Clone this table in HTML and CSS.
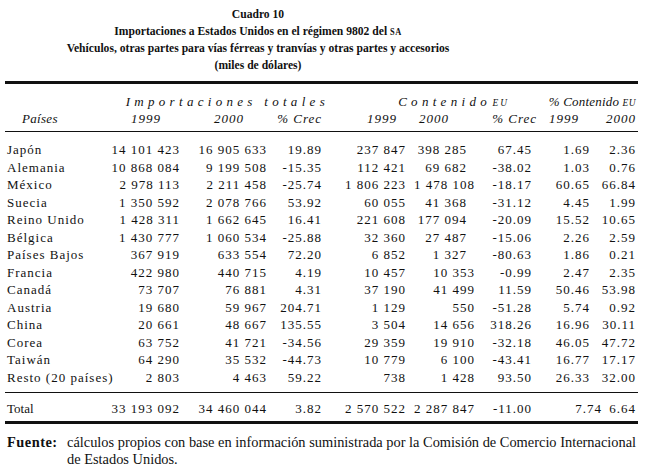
FILE: index.html
```html
<!DOCTYPE html>
<html lang="es">
<head>
<meta charset="utf-8">
<title>Cuadro 10</title>
<link rel="stylesheet" href="styles.css">
</head>
<body>
<div class="page">
  <div class="title">
    <div class="tline">Cuadro 10</div>
    <div class="tline">Importaciones a Estados Unidos en el régimen 9802 del <span class="sc">SA</span></div>
    <div class="tline">Vehículos, otras partes para vías férreas y tranvías y otras partes y accesorios</div>
    <div class="tline">(miles de dólares)</div>
  </div>
  <table class="tbl">
    <colgroup>
      <col class="w0"><col class="w1"><col class="w2"><col class="w3"><col class="w4"><col class="w5"><col class="w6"><col class="w7"><col class="w8">
    </colgroup>
    <thead>
      <tr class="h1">
        <th></th>
        <th colspan="3" class="grp grp-imp"><span class="pull7">Importaciones totales</span></th>
        <th colspan="3" class="grp grp-con">Contenido <span class="sc">EU</span></th>
        <th colspan="2" class="pct">% Contenido <span class="sc">EU</span></th>
      </tr>
      <tr class="h2">
        <th class="pais">Países</th>
        <th class="p19">1999</th>
        <th class="p23">2000</th>
        <th class="p0">% Crec</th>
        <th class="p9">1999</th>
        <th class="p26">2000</th>
        <th class="p0"><span class="pull5">% Crec</span></th>
        <th class="p11">1999</th>
        <th>2000</th>
      </tr>
    </thead>
    <tbody>
      <tr><td>Japón</td><td>14 101 423</td><td>16 905 633</td><td>19.89</td><td>237 847</td><td class="n8">398 285</td><td>67.45</td><td>1.69</td><td>2.36</td></tr>
      <tr><td>Alemania</td><td>10 868 084</td><td>9 199 508</td><td>-15.35</td><td>112 421</td><td class="n8">69 682</td><td>-38.02</td><td>1.03</td><td>0.76</td></tr>
      <tr><td>México</td><td>2 978 113</td><td>2 211 458</td><td>-25.74</td><td>1 806 223</td><td>1 478 108</td><td>-18.17</td><td>60.65</td><td>66.84</td></tr>
      <tr><td>Suecia</td><td>1 350 592</td><td>2 078 766</td><td>53.92</td><td>60 055</td><td class="n8">41 368</td><td>-31.12</td><td>4.45</td><td>1.99</td></tr>
      <tr><td>Reino Unido</td><td>1 428 311</td><td>1 662 645</td><td>16.41</td><td>221 608</td><td class="n8">177 094</td><td>-20.09</td><td>15.52</td><td>10.65</td></tr>
      <tr><td>Bélgica</td><td>1 430 777</td><td>1 060 534</td><td>-25.88</td><td>32 360</td><td class="n8">27 487</td><td>-15.06</td><td>2.26</td><td>2.59</td></tr>
      <tr><td>Países Bajos</td><td>367 919</td><td>633 554</td><td>72.20</td><td>6 852</td><td class="n8">1 327</td><td>-80.63</td><td>1.86</td><td>0.21</td></tr>
      <tr><td>Francia</td><td>422 980</td><td>440 715</td><td>4.19</td><td>10 457</td><td>10 353</td><td>-0.99</td><td>2.47</td><td>2.35</td></tr>
      <tr><td>Canadá</td><td>73 707</td><td>76 881</td><td>4.31</td><td>37 190</td><td>41 499</td><td>11.59</td><td>50.46</td><td>53.98</td></tr>
      <tr><td>Austria</td><td>19 680</td><td>59 967</td><td>204.71</td><td>1 129</td><td>550</td><td>-51.28</td><td>5.74</td><td>0.92</td></tr>
      <tr><td>China</td><td>20 661</td><td>48 667</td><td>135.55</td><td>3 504</td><td>14 656</td><td>318.26</td><td>16.96</td><td>30.11</td></tr>
      <tr><td>Corea</td><td>63 752</td><td>41 721</td><td>-34.56</td><td>29 359</td><td>19 910</td><td>-32.18</td><td>46.05</td><td>47.72</td></tr>
      <tr><td>Taiwán</td><td>64 290</td><td>35 532</td><td>-44.73</td><td>10 779</td><td>6 100</td><td>-43.41</td><td>16.77</td><td>17.17</td></tr>
      <tr class="last"><td>Resto (20 países)</td><td>2 803</td><td>4 463</td><td>59.22</td><td>738</td><td>1 428</td><td>93.50</td><td>26.33</td><td>32.00</td></tr>
    </tbody>
    <tfoot>
      <tr class="total"><td>Total</td><td>33 193 092</td><td>34 460 044</td><td>3.82</td><td>2 570 522</td><td>2 287 847</td><td>-11.00</td><td class="p0"><span class="pull12">7.74</span></td><td>6.64</td></tr>
    </tfoot>
  </table>
  <div class="note">
    <div class="note-label">Fuente:</div>
    <div class="note-text">cálculos propios con base en información suministrada por la Comisión de Comercio Internacional<br>de Estados Unidos.</div>
  </div>
</div>
</body>
</html>
```

FILE: styles.css
```css
html, body {
  margin: 0;
  padding: 0;
  background: #ffffff;
}

body {
  font-family: "Liberation Serif", "Times New Roman", serif;
  color: #111111;
}

.page {
  width: 633px;
  padding: 5px 7px 0 5px;
}

.title {
  width: 506px;
  text-align: center;
  font-weight: bold;
  font-size: 13px;
  line-height: 17px;
}

.tline {
  transform: scaleX(0.893);
  transform-origin: center;
  white-space: nowrap;
}

.sc {
  font-size: 0.72em;
  line-height: 1;
  letter-spacing: 0.5px;
}

.tbl {
  margin-top: 8px;
  width: 633px;
  table-layout: fixed;
  border-collapse: collapse;
  font-size: 13px;
  letter-spacing: 1px;
  line-height: 17.5px;
}

.w0 { width: 105px; }
.w1 { width: 70px; }
.w2 { width: 87px; }
.w3 { width: 55px; }
.w4 { width: 84px; }
.w5 { width: 69px; }
.w6 { width: 57px; }
.w7 { width: 58px; }
.w8 { width: 48px; }

.tbl th,
.tbl td {
  padding: 0;
  text-align: right;
  white-space: nowrap;
  font-weight: normal;
}

.tbl td:first-child {
  text-align: left;
  padding-left: 2px;
}

.tbl td:last-child,
.tbl th:last-child {
  padding-right: 2px;
}

.tbl thead {
  border-top: 3px solid #111;
  border-bottom: 1px solid #111;
}

.tbl th {
  font-style: italic;
  line-height: 17px;
}

.tbl .h1 th {
  padding-top: 8.5px;
}

.tbl .h2 th {
  padding-bottom: 4.5px;
}

.tbl th.grp {
  letter-spacing: 4.3px;
}

.tbl th.grp-con {
  padding-right: 23px;
  word-spacing: -6px;
}

.tbl th.grp .sc {
  letter-spacing: 2px;
}

.tbl th.pct {
  letter-spacing: 0.2px;
}

.tbl .h2 th.pais {
  text-align: left;
  padding-left: 17px;
  letter-spacing: 0.3px;
}

.tbl .h2 th.p0 { padding-right: 0; }
.tbl .h2 th.p9 { padding-right: 9px; }
.tbl .h2 th.p11 { padding-right: 11px; }
.tbl .h2 th.p19 { padding-right: 19px; }
.tbl .h2 th.p23 { padding-right: 23px; }
.tbl .h2 th.p26 { padding-right: 26px; }

.pull5,
.pull7,
.pull12 {
  display: inline-block;
}

.pull5 { margin-right: -5px; }
.pull7 { margin-right: -7px; }
.pull12 { margin-right: -12px; }

.tbl tbody tr:first-child td {
  padding-top: 9px;
}

.tbl tbody tr.last td {
  padding-bottom: 6px;
}

.tbl td.n8 {
  padding-right: 8px;
}

.tbl tfoot {
  border-top: 1px solid #111;
  border-bottom: 3px solid #111;
}

.tbl .total td {
  padding-top: 6.5px;
  padding-bottom: 4.5px;
  line-height: 17px;
}

.tbl .total td:first-child {
  letter-spacing: 0;
}

.tbl .total td.p0 {
  padding-right: 0;
}

.note {
  display: grid;
  grid-template-columns: 60px 1fr;
  margin-top: 9.5px;
  padding-left: 2px;
  font-size: 14.4px;
  line-height: 17px;
}

.note-label {
  font-weight: bold;
  letter-spacing: 0.5px;
}

.note-text {
  white-space: nowrap;
}
```
